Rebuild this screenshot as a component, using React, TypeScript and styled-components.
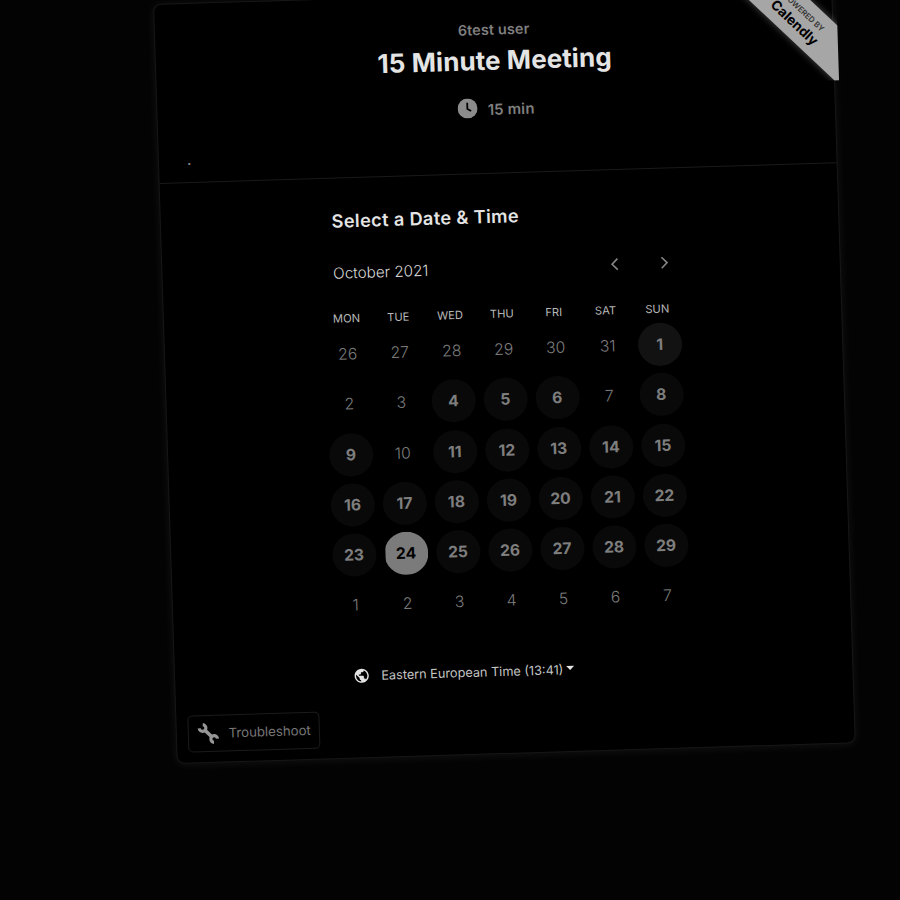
import React from "react";
import styled, { createGlobalStyle } from "styled-components";
import { MdPublic } from "react-icons/md";

const GlobalStyle = createGlobalStyle`
  html, body { margin: 0; background: #030303; height: 100%; overflow: hidden; }
  * { box-sizing: border-box; }
  body { font-family: Inter, "Liberation Sans", sans-serif; color: #e4e4e4; }
`;

const Page = styled.main`
  width: 900px;
  height: 900px;
  padding: 4px 0 0 152.6px;
  overflow: hidden;
  background: #030303;
`;

const Card = styled.section`
  position: relative;
  display: flex;
  flex-direction: column;
  width: 679px;
  height: 760px;
  border: 1px solid #171717;
  border-radius: 8px;
  background: #000;
  box-shadow: 0 1px 9px 1px rgba(255, 255, 255, 0.06);
  transform-origin: 0 0;
  transform: matrix(1, -0.0305, 0.0313, 1, 0, 0);
`;

const Header = styled.header`
  height: 178.5px;
  padding-top: 25px;
  display: flex;
  flex-direction: column;
  align-items: center;
  border-bottom: 1px solid #1a1a1a;
`;

const Host = styled.div`
  font-size: 14.5px;
  line-height: 20px;
  font-weight: 600;
  letter-spacing: 0.1px;
  color: #7e7e7e;
`;

const Title = styled.h1`
  margin: 4px 0 0;
  font-size: 26px;
  line-height: 34px;
  font-weight: 650;
  letter-spacing: 0.08px;
  white-space: nowrap;
`;

const Duration = styled.div`
  display: flex;
  align-items: center;
  gap: 10px;
  margin-top: 19px;
  height: 22px;
  font-size: 15px;
  font-weight: 600;
  letter-spacing: 0.1px;
  color: #7e7e7e;
  svg { width: 20px; height: 20px; display: block; }
  span { padding-top: 2px; }
`;

const Note = styled.div`
  align-self: flex-start;
  margin: 24px 0 0 28px;
  font-size: 16px;
  line-height: 15px;
  color: #8c8c8c;
`;

const Booking = styled.div`
  display: flex;
  flex-direction: column;
  width: 370px;
  margin-left: 156.6px;
`;

const Heading = styled.h2`
  margin: 30.5px 0 0 14px;
  font-size: 18.2px;
  line-height: 24px;
  font-weight: 600;
  letter-spacing: 0.35px;
  white-space: nowrap;
`;

const MonthBar = styled.div`
  display: flex;
  align-items: center;
  height: 24px;
  margin: 28px 0 0 14px;
`;

const Month = styled.span`
  flex: none;
  width: 270px;
  font-size: 15.2px;
  font-weight: 300;
  color: #d8d8d8;
`;

const Arrow = styled.button`
  flex: none;
  display: flex;
  align-items: center;
  justify-content: center;
  width: 22px;
  height: 22px;
  margin-right: 28px;
  padding: 0;
  border: 0;
  background: none;
  color: #858585;
`;

const Grid = styled.div`
  display: grid;
`;

const WeekGrid = styled(Grid)`
  grid-template-columns: repeat(7, 51.8px);
  margin-top: 24px;
`;

const DayGrid = styled(Grid)`
  grid-template-columns: repeat(7, 52px);
  grid-auto-rows: 50.3px;
`;

const Weekday = styled.span`
  height: 20.3px;
  line-height: 20px;
  text-align: center;
  font-size: 11.2px;
  color: #b8b8b8;
`;

const Cell = styled.div`
  display: flex;
  align-items: center;
  justify-content: center;
`;

type DayState = "off" | "open" | "today" | "selected";
const fills: Record<DayState, string> = { off: "transparent", open: "#090909", today: "#121212", selected: "#7b7b7b" };

const Day = styled.span<{ $state: DayState }>`
  display: flex;
  align-items: center;
  justify-content: center;
  width: 44px;
  height: 43px;
  border-radius: 50%;
  font-size: 15.7px;
  font-weight: ${(p) => (p.$state === "off" ? 300 : 700)};
  color: ${(p) => (p.$state === "off" ? "#7c7c7c" : p.$state === "selected" ? "#000" : "#7e7e7e")};
  background: ${(p) => fills[p.$state]};
  clip-path: ${(p) => (p.$state === "selected" ? "inset(0 0 0 1.5px)" : "none")};
`;

const Timezone = styled.div`
  display: flex;
  align-items: center;
  height: 20px;
  margin: 35px 0 0 21.5px;
  font-size: 12.7px;
  white-space: nowrap;
  color: #c4c4c4;
`;

const Globe = styled(MdPublic)`
  width: 17px;
  height: 17px;
  margin-right: 11px;
  color: #e4e4e4;
`;

const Caret = styled.i`
  margin-left: 3px;
  margin-top: -2px;
  border: 4px solid transparent;
  border-top-color: #e4e4e4;
  border-bottom: 0;
`;

const Troubleshoot = styled.button`
  display: flex;
  align-items: center;
  gap: 9px;
  width: 132.5px;
  height: 37px;
  margin: auto 0 10.3px 10.8px;
  padding: 0 0 0 8px;
  border: 1px solid #1b1b1b;
  border-radius: 5px;
  background: none;
  font: 400 13.2px Inter, sans-serif;
  color: #777;
`;

const RibbonClip = styled.div`
  position: absolute;
  top: -1px;
  right: -5.4px;
  width: 130px;
  height: 97px;
  overflow: hidden;
`;

const Ribbon = styled.div`
  position: absolute;
  left: -7.5px;
  top: 13.5px;
  width: 200px;
  height: 42px;
  display: flex;
  flex-direction: column;
  align-items: center;
  padding: 7.5px 3.5px 0 0;
  background: #a6a6a6;
  box-shadow: 0 0 6px 1px rgba(190, 190, 190, 0.3);
  transform: rotate(45deg);
`;

const Powered = styled.span`
  font-size: 7.8px;
  line-height: 10px;
  font-weight: 600;
  color: #333;
`;

const Brand = styled.span`
  font-size: 13.7px;
  line-height: 18px;
  font-weight: 700;
  color: #000;
`;

const weekdays = ["MON", "TUE", "WED", "THU", "FRI", "SAT", "SUN"];
const leading = [26, 27, 28, 29, 30, 31];
const month = Array.from({ length: 29 }, (_, i) => i + 1);
const trailing = [1, 2, 3, 4, 5, 6, 7];
const closed = [2, 3, 7, 10];

const stateOf = (d: number): DayState =>
  closed.includes(d) ? "off" : d === 24 ? "selected" : d === 1 ? "today" : "open";

const days: { n: number; state: DayState }[] = [
  ...leading.map((n) => ({ n, state: "off" as DayState })),
  ...month.map((n) => ({ n, state: stateOf(n) })),
  ...trailing.map((n) => ({ n, state: "off" as DayState })),
];

const ClockIcon = () => (
  <svg viewBox="0 0 20 20">
    <circle cx="10" cy="10" r="10" fill="#8c8c8c" />
    <path d="M9.8 4.2v6.2l3.7 2.2" fill="none" stroke="#000" strokeWidth="1.8" />
  </svg>
);

const WrenchIcon = () => (
  <svg width="23" height="23" viewBox="0 0 24 24" fill="none" stroke="#969696">
    <path d="M8 8l8 8" strokeWidth="3.8" />
    <path d="M6.4 2.6a3.5 3.5 0 1 1-3.8 3.8M17.6 21.4a3.5 3.5 0 1 1 3.8-3.8" strokeWidth="3.3" />
  </svg>
);

const Chevron = ({ d }: { d: string }) => (
  <svg width="10" height="14" viewBox="0 0 10 14" fill="none" stroke="currentColor" strokeWidth="1.6">
    <path d={d} />
  </svg>
);

export default function App() {
  return (
    <Page>
      <GlobalStyle />
      <Card>
        <Header>
          <Host>6test user</Host>
          <Title>15 Minute Meeting</Title>
          <Duration>
            <ClockIcon />
            <span>15 min</span>
          </Duration>
          <Note>.</Note>
        </Header>
        <Booking>
          <Heading>Select a Date &amp; Time</Heading>
          <MonthBar>
            <Month>October 2021</Month>
            <Arrow aria-label="Previous month"><Chevron d="M8 1.5L2.5 7 8 12.5" /></Arrow>
            <Arrow aria-label="Next month"><Chevron d="M2 1.5L7.5 7 2 12.5" /></Arrow>
          </MonthBar>
          <WeekGrid>
            {weekdays.map((w) => <Weekday key={w}>{w}</Weekday>)}
          </WeekGrid>
          <DayGrid>
            {days.map((d, i) => (
              <Cell key={i}><Day $state={d.state}>{d.n}</Day></Cell>
            ))}
          </DayGrid>
          <Timezone>
            <Globe />
            Eastern European Time (13:41)
            <Caret />
          </Timezone>
        </Booking>
        <Troubleshoot><WrenchIcon />Troubleshoot</Troubleshoot>
        <RibbonClip>
          <Ribbon>
            <Powered>POWERED BY</Powered>
            <Brand>Calendly</Brand>
          </Ribbon>
        </RibbonClip>
      </Card>
    </Page>
  );
}
